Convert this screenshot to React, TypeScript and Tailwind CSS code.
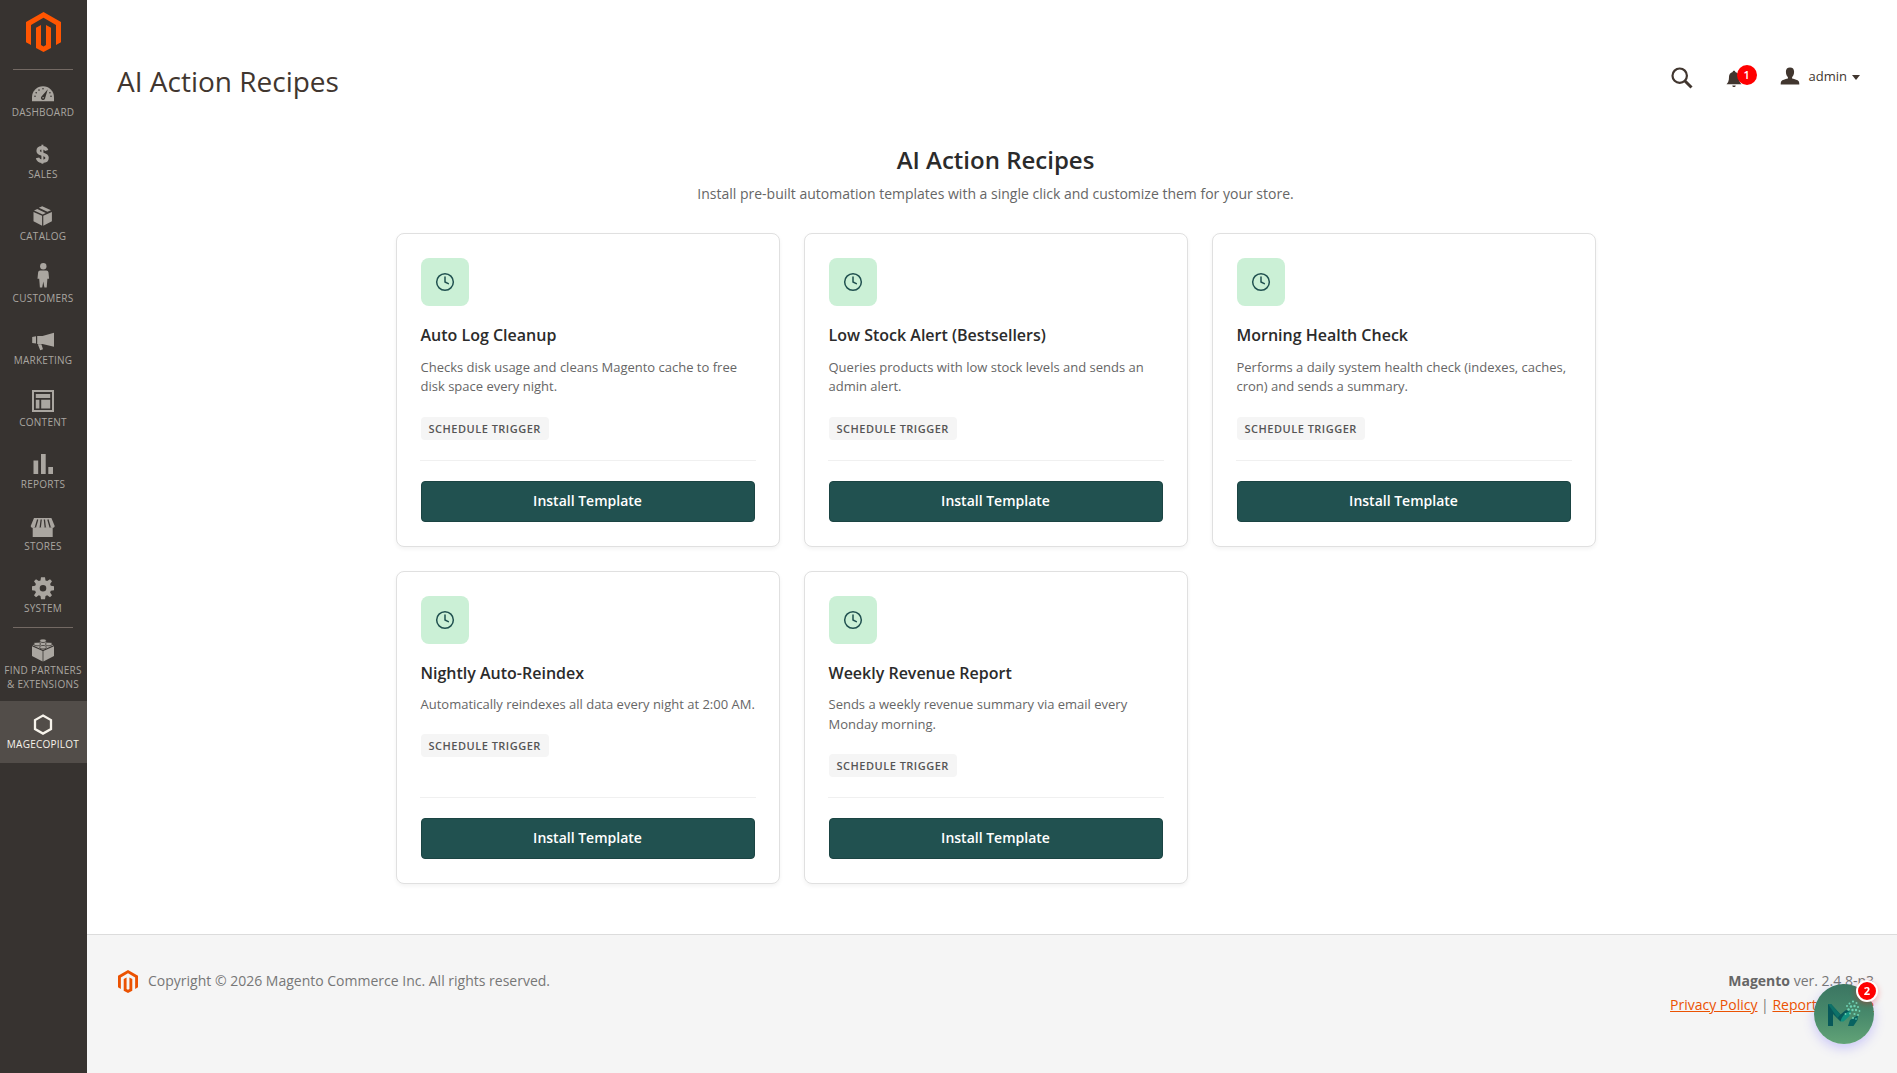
import type { ReactNode } from 'react';
import { Clock } from 'lucide-react';

interface Recipe {
  title: string;
  description: string;
}

interface MenuEntry {
  label: string;
  icon: ReactNode;
  tall?: boolean;
  active?: boolean;
  divider?: boolean;
}

const recipes: Recipe[] = [
  {
    title: 'Auto Log Cleanup',
    description: 'Checks disk usage and cleans Magento cache to free disk space every night.',
  },
  {
    title: 'Low Stock Alert (Bestsellers)',
    description: 'Queries products with low stock levels and sends an admin alert.',
  },
  {
    title: 'Morning Health Check',
    description: 'Performs a daily system health check (indexes, caches, cron) and sends a summary.',
  },
  {
    title: 'Nightly Auto-Reindex',
    description: 'Automatically reindexes all data every night at 2:00 AM.',
  },
  {
    title: 'Weekly Revenue Report',
    description: 'Sends a weekly revenue summary via email every Monday morning.',
  },
];

// All sidebar glyphs share a 24x24 grid, dx/dy nudge them optically
function Glyph({ children, dx = 0, dy = 0 }: { children: ReactNode; dx?: number; dy?: number }) {
  return (
    <svg viewBox={`${-dx} ${-dy} 24 24`} className="w-6 h-6 block overflow-visible" fill="currentColor">
      {children}
    </svg>
  );
}

function MagentoLogo({ className }: { className: string }) {
  return (
    <svg viewBox="0 0 35 40" className={className} fill="currentColor">
      <path d="M17.5 0 35 10v20.2l-5 2.9V12.9L17.5 5.7 5 12.9v20.2l-5-2.9V10z" />
      <path d="M15 12.9v20.2l2.5 1.5 2.5-1.5V12.9l5 2.8v20.3l-7.5 4-7.5-4V15.7z" />
    </svg>
  );
}

const menu: MenuEntry[] = [
  {
    label: 'Dashboard',
    icon: (
      <Glyph dy={0.8}>
        <path d="M1 19.5V15.5a11 11 0 0 1 22 0v4z" />
        <g fill="#373330">
          <circle cx="4" cy="14.5" r=".8" />
          <circle cx="5.2" cy="11" r=".8" />
          <circle cx="8" cy="8.3" r=".8" />
          <circle cx="12" cy="7" r=".8" />
          <circle cx="18.9" cy="11" r=".8" />
          <circle cx="20" cy="14.5" r=".8" />
          <path d="m16.8 7.4-6.3 7.2a2.1 2.1 0 1 0 3.6 1.8z" />
        </g>
        <circle cx="12.1" cy="15.9" r=".8" />
      </Glyph>
    ),
  },
  {
    label: 'Sales',
    icon: (
      <Glyph dx={-0.6}>
        <path
          d="M16.3 7.5c-.6-1.9-2.2-2.7-4.4-2.7-2.4 0-4.2 1.1-4.2 3.1 0 4.3 9 2 9 6.8 0 2.3-1.9 3.5-4.6 3.5-2.6 0-4.5-1.1-5-3.4"
          fill="none"
          stroke="currentColor"
          strokeWidth="3.4"
        />
        <path d="M11 1.7h2v19h-2z" />
      </Glyph>
    ),
  },
  {
    label: 'Catalog',
    icon: (
      <Glyph dx={-0.3} dy={-1.7}>
        <path d="m2.8 8.6 8.6 3.9v10L2.8 18zM21.2 8.6v9.4l-8.6 4.5v-10z" />
        <path d="m3.3 7.2 3.3-1.6 8.5 4-3.1 1.5zM8.2 4.5l3.3-1.6 8.8 4-3.6 1.6z" />
      </Glyph>
    ),
  },
  {
    label: 'Customers',
    icon: (
      <Glyph dy={-3.6}>
        <circle cx="12.3" cy="2.8" r="3.2" />
        <path d="M9.3 7h6c1.3 0 2 .8 2.2 2l.6 6.3h-1.7l-.7 8.7h-2.3l-1.1-6-1.1 6H8.9l-.7-8.700H6.500L7.100 9c.2-1.200.9-2 2.200-2z" />
      </Glyph>
    ),
  },
  {
    label: 'Marketing',
    icon: (
      <Glyph dy={-0.3}>
        <path d="M23 4v14l-11.500-2.600H6.200V7.300h5.300z" />
        <path d="M1.200 8.200 5 7.600v7.200l-3.800-.6zM6.800 15.600h3.600l1.600 5-2.800.9z" />
      </Glyph>
    ),
  },
  {
    label: 'Content',
    icon: (
      <Glyph dy={-2.5}>
        <path fillRule="evenodd" d="M1 1.500h22v22H1zM3 3.500v18h18v-18z" />
        <path d="M4.800 5.500h14.400v4H4.800zM4.800 11.300h3.600v8.700H4.800zM10.200 11.300h9v8.700h-9z" />
      </Glyph>
    ),
  },
  {
    label: 'Reports',
    icon: (
      <Glyph dy={-2}>
        <path d="M2.500 9.500h4.700V23H2.500zM10 3h4.700v20H10zM17.300 16H22v7h-4.700z" />
      </Glyph>
    ),
  },
  {
    label: 'Stores',
    icon: (
      <Glyph dx={-0.3}>
        <path d="M2 12.500h20V22H2z" />
        <path d="M3.300 3h17.400L24 11c0 2.200-3.800 2.800-4.500.5-.7 2.200-4.300 2.200-5 0-.8 2.200-4.200 2.200-5 0-.7 2.200-4.300 2.200-5 0C3.800 13.800 0 13.200 0 11z" />
        <g stroke="#373330" strokeWidth="1.300">
          <path d="M7 4.500 4.800 12M10.500 4.500 9.600 12M13.700 4.500l.8 7.500M17.200 4.500l2.200 7.500" />
        </g>
      </Glyph>
    ),
  },
  {
    label: 'System',
    icon: (
      <Glyph dy={-0.8}>
        <path
          fillRule="evenodd"
          d="m10 1-.5 3.200-1.700.7L5 3 3 5l1.900 2.800-.7 1.700L1 10v4l3.200.5.7 1.700L3 19l2 2 2.800-1.900 1.700.7L10 23h4l.5-3.200 1.700-.7L19 21l2-2-1.900-2.800.7-1.700L23 14v-4l-3.200-.5-.7-1.700L21 5l-2-2-2.800 1.900-1.700-.7L14 1zm2 7.700a3.300 3.300 0 1 1 0 6.600 3.300 3.300 0 0 1 0-6.600z"
        />
      </Glyph>
    ),
  },
  {
    label: 'Find Partners & Extensions',
    tall: true,
    divider: true,
    icon: (
      <Glyph dy={-1}>
        <path d="M1 8.300 11.600 13v10.500L1 18zM23 8.300V18l-10.600 5.500V13z" />
        <path d="m12 2.500 10.500 4.800L12 12 1.500 7.300z" />
        <g stroke="#373330" strokeWidth=".8">
          <path d="M8.800 3.200v-1c0-1.600 6.400-1.600 6.400 0v1c0 1.700-6.400 1.700-6.400 0zM2.900 6.500v-1c0-1.600 6.400-1.600 6.400 0v1c0 1.700-6.400 1.700-6.400 0zM14.700 6.500v-1c0-1.600 6.400-1.600 6.400 0v1c0 1.700-6.400 1.700-6.400 0zM8.800 9.700v-1c0-1.600 6.400-1.600 6.400 0v1c0 1.700-6.400 1.700-6.400 0z" />
        </g>
      </Glyph>
    ),
  },
  {
    label: 'MageCopilot',
    active: true,
    icon: (
      <Glyph dy={-0.6}>
        <path d="m12 3.200 8 4.500v9l-8 4.500-8-4.500v-9z" fill="none" stroke="currentColor" strokeWidth="2.300" />
      </Glyph>
    ),
  },
];

function MenuItem({ item }: { item: MenuEntry }) {
  return (
    <li
      className={`relative flex flex-col items-center pt-3 ${item.tall ? 'h-[74px]' : 'h-[62px]'} ${
        item.active ? 'bg-[#524d49] text-[#f7f3eb]' : 'text-[#aaa6a0]'
      }`}
    >
      {item.divider && <span className="absolute top-0 left-[13px] w-[60px] h-px bg-[#736963]" />}
      <a href="#" className="flex flex-col items-center w-full pr-px">
        {item.icon}
        <span className="text-[10px] leading-[14px] tracking-[0.025em] uppercase text-center">{item.label}</span>
      </a>
    </li>
  );
}

function Sidebar() {
  return (
    <nav className="w-[87px] shrink-0 bg-[#373330]">
      <a href="#" className="flex justify-center h-[69px] pt-3 text-[#ff5501]">
        <MagentoLogo className="w-[35px] h-10" />
      </a>
      <ul>
        {menu.map((item, i) => (
          <MenuItem key={item.label} item={{ ...item, divider: item.divider || i === 0 }} />
        ))}
      </ul>
    </nav>
  );
}

function Header() {
  return (
    <header className="flex justify-between pt-[61px] h-[142px] pr-[37px] text-[#41362f]">
      <h1 className="text-[28px] leading-10">AI Action Recipes</h1>
      <div className="flex items-start pt-[6px]">
        <svg viewBox="0 0 22 22" className="w-[22px] h-[22px] mr-[33px]" fill="none" stroke="currentColor">
          <circle cx="8.7" cy="8.7" r="7.2" strokeWidth="2.2" />
          <path d="m14 14 6.500 6.500" strokeWidth="3" />
        </svg>
        <div className="relative w-[31px] h-[22px] mr-[23px]">
          <svg viewBox="0 0 16 18" className="w-4 h-[18px] mt-[3px]" fill="currentColor">
            <path d="M8 .8c.8 0 1.300.5 1.300 1.200 2.400.6 3.700 2.600 3.700 5 0 4 .9 5.500 2.500 7.200H.5C2.100 12.500 3 11 3 7c0-2.400 1.300-4.400 3.700-5C6.700 1.300 7.200.8 8 .8zM6.300 15.500h3.400c0 2-3.400 2-3.400 0z" />
          </svg>
          <span className="absolute -top-[2px] left-[11px] w-5 h-5 rounded-full bg-[#f00] text-white text-[11px] leading-5 font-semibold text-center">
            1
          </span>
        </div>
        <a href="#" className="flex items-center text-[13px] leading-[18px]">
          <svg viewBox="0 0 20 18" className="w-5 h-[18px] mr-[9px]" fill="currentColor">
            <path d="M10 .5c2.700 0 4.100 1.600 4.100 4.200 0 2.500-.9 4.300-2 5.300v1.500c2.900.9 5.600 1.300 6.600 2.700.5.700.6 2 .6 3.300H.7c0-1.300.1-2.600.6-3.300 1-1.400 3.700-1.800 6.600-2.700V10c-1.100-1-2-2.800-2-5.300C5.900 2.100 7.300.5 10 .5z" />
          </svg>
          admin
          <span className="ml-[5px] mt-[2px] border-x-4 border-x-transparent border-t-5 border-t-[#41362f]" />
        </a>
      </div>
    </header>
  );
}

function RecipeCard({ recipe }: { recipe: Recipe }) {
  return (
    <article className="flex flex-col rounded-lg border border-[#e0e0e0] bg-white p-6 shadow-[0_2px_4px_rgba(0,0,0,0.05)]">
      <div className="flex items-center justify-center w-12 h-12 mb-4 rounded-lg bg-[#cbf0d6] text-[#215150]">
        <Clock size={20} strokeWidth={1.8} />
      </div>
      <h3 className="mb-[9.4px] text-base leading-[26px] font-semibold text-[#2b2b2b]">{recipe.title}</h3>
      <p className="mb-[19.7px] -mr-1 text-[13px] leading-[19.5px] text-[#666]">{recipe.description}</p>
      <span className="self-start px-2 py-1 mb-[20.2px] rounded-sm bg-[#f5f5f5] text-[11px] leading-[15px] font-semibold tracking-[0.5px] uppercase text-[#555]">
        Schedule Trigger
      </span>
      <div className="mt-auto -mx-px px-px pt-5 border-t border-[#f0f0f0]">
        <button className="w-full h-[41px] rounded-[4px] border border-[#1b4443] bg-[#215150] text-sm font-semibold text-white">
          Install Template
        </button>
      </div>
    </article>
  );
}

function CopilotBubble() {
  return (
    <button className="fixed right-[23px] bottom-[29px] w-[60px] h-[60px] rounded-full bg-linear-to-b from-[#3b7562] via-[#47896b] to-[#62a377] shadow-[0_4px_12px_rgba(99,91,255,0.3)]">
      <svg viewBox="0 0 60 60" className="w-full h-full">
        <path d="M14 42V20h3l9.500 10.500 5.500-4.500 4.500 1-10 10.500L19 30v12z" fill="#07585a" />
        <path d="M14 20h3l9.500 10.500-3 3.500z" fill="#0d7168" />
        <path d="M26.500 37.500c1-5 4.500-8.500 10.500-11l-1.500 5.500-6 5.500z" fill="#12907f" />
        <path d="m34 42 2-6 8-5-.5 5-4 6z" fill="#086361" />
        <g fill="#6fd3b5">
          <circle cx="33" cy="22" r="1" />
          <circle cx="35.5" cy="19.5" r="1" />
          <circle cx="39" cy="17.5" r="1.1" />
          <circle cx="42.5" cy="19" r="1" />
          <circle cx="37" cy="22.5" r="1.2" />
          <circle cx="40.5" cy="22" r="1.2" />
          <circle cx="44" cy="23" r="1" />
          <circle cx="34.5" cy="25.5" r="1.2" />
          <circle cx="38.5" cy="26" r="1.2" />
          <circle cx="42" cy="26" r="1.2" />
          <circle cx="45.5" cy="27" r=".9" />
          <circle cx="31.5" cy="30" r=".9" />
          <circle cx="36" cy="29.5" r=".9" />
          <circle cx="40.5" cy="30" r="1.1" />
          <circle cx="44" cy="31" r="1" />
          <circle cx="39" cy="34" r="1" />
          <circle cx="42" cy="35" r=".8" />
        </g>
      </svg>
      <span className="absolute -top-1 -right-1 w-[22px] h-[22px] rounded-full border-2 border-white bg-[#f00] text-white text-[11px] leading-[18px] font-bold text-center shadow-[0_2px_6px_rgba(255,0,0,0.3)]">
        2
      </span>
    </button>
  );
}

function Footer() {
  return (
    <footer className="flex justify-between grow pl-[31px] pr-[23px] pt-[34px] border-t border-[#dcdcdc] bg-[#f5f5f5] text-sm leading-6 text-[#777]">
      <div className="flex items-start">
        <MagentoLogo className="w-5 h-[23px] mt-[1px] mr-[10px] text-[#eb5202]" />
        Copyright © 2026 Magento Commerce Inc. All rights reserved.
      </div>
      <div className="text-right">
        <p>
          <strong className="font-bold text-[#666]">Magento</strong> ver. 2.4.8-p3
        </p>
        <p>
          <a href="#" className="text-[#eb5202] underline">Privacy Policy</a>
          {' | '}
          <a href="#" className="text-[#eb5202] underline">Report an Issue</a>
        </p>
      </div>
    </footer>
  );
}

export default function App() {
  return (
    <div className="flex min-h-screen bg-white font-['Open_Sans',sans-serif]">
      <Sidebar />
      <div className="flex flex-col grow">
        <main className="h-[934px] pl-[30px] pr-[23px]">
          <div className="-mr-[23px]">
            <Header />
          </div>
          <section className="w-[1200px] mx-auto">
            <div className="text-center">
              <h2 className="text-2xl leading-9 font-semibold text-[#2b2b2b]">AI Action Recipes</h2>
              <p className="mt-[6px] text-sm leading-5 text-[#666]">
                Install pre-built automation templates with a single click and customize them for your store.
              </p>
            </div>
            <div className="grid grid-cols-3 gap-6 mt-[29.45px]">
              {recipes.map((recipe) => (
                <RecipeCard key={recipe.title} recipe={recipe} />
              ))}
            </div>
          </section>
        </main>
        <Footer />
      </div>
      <CopilotBubble />
    </div>
  );
}
